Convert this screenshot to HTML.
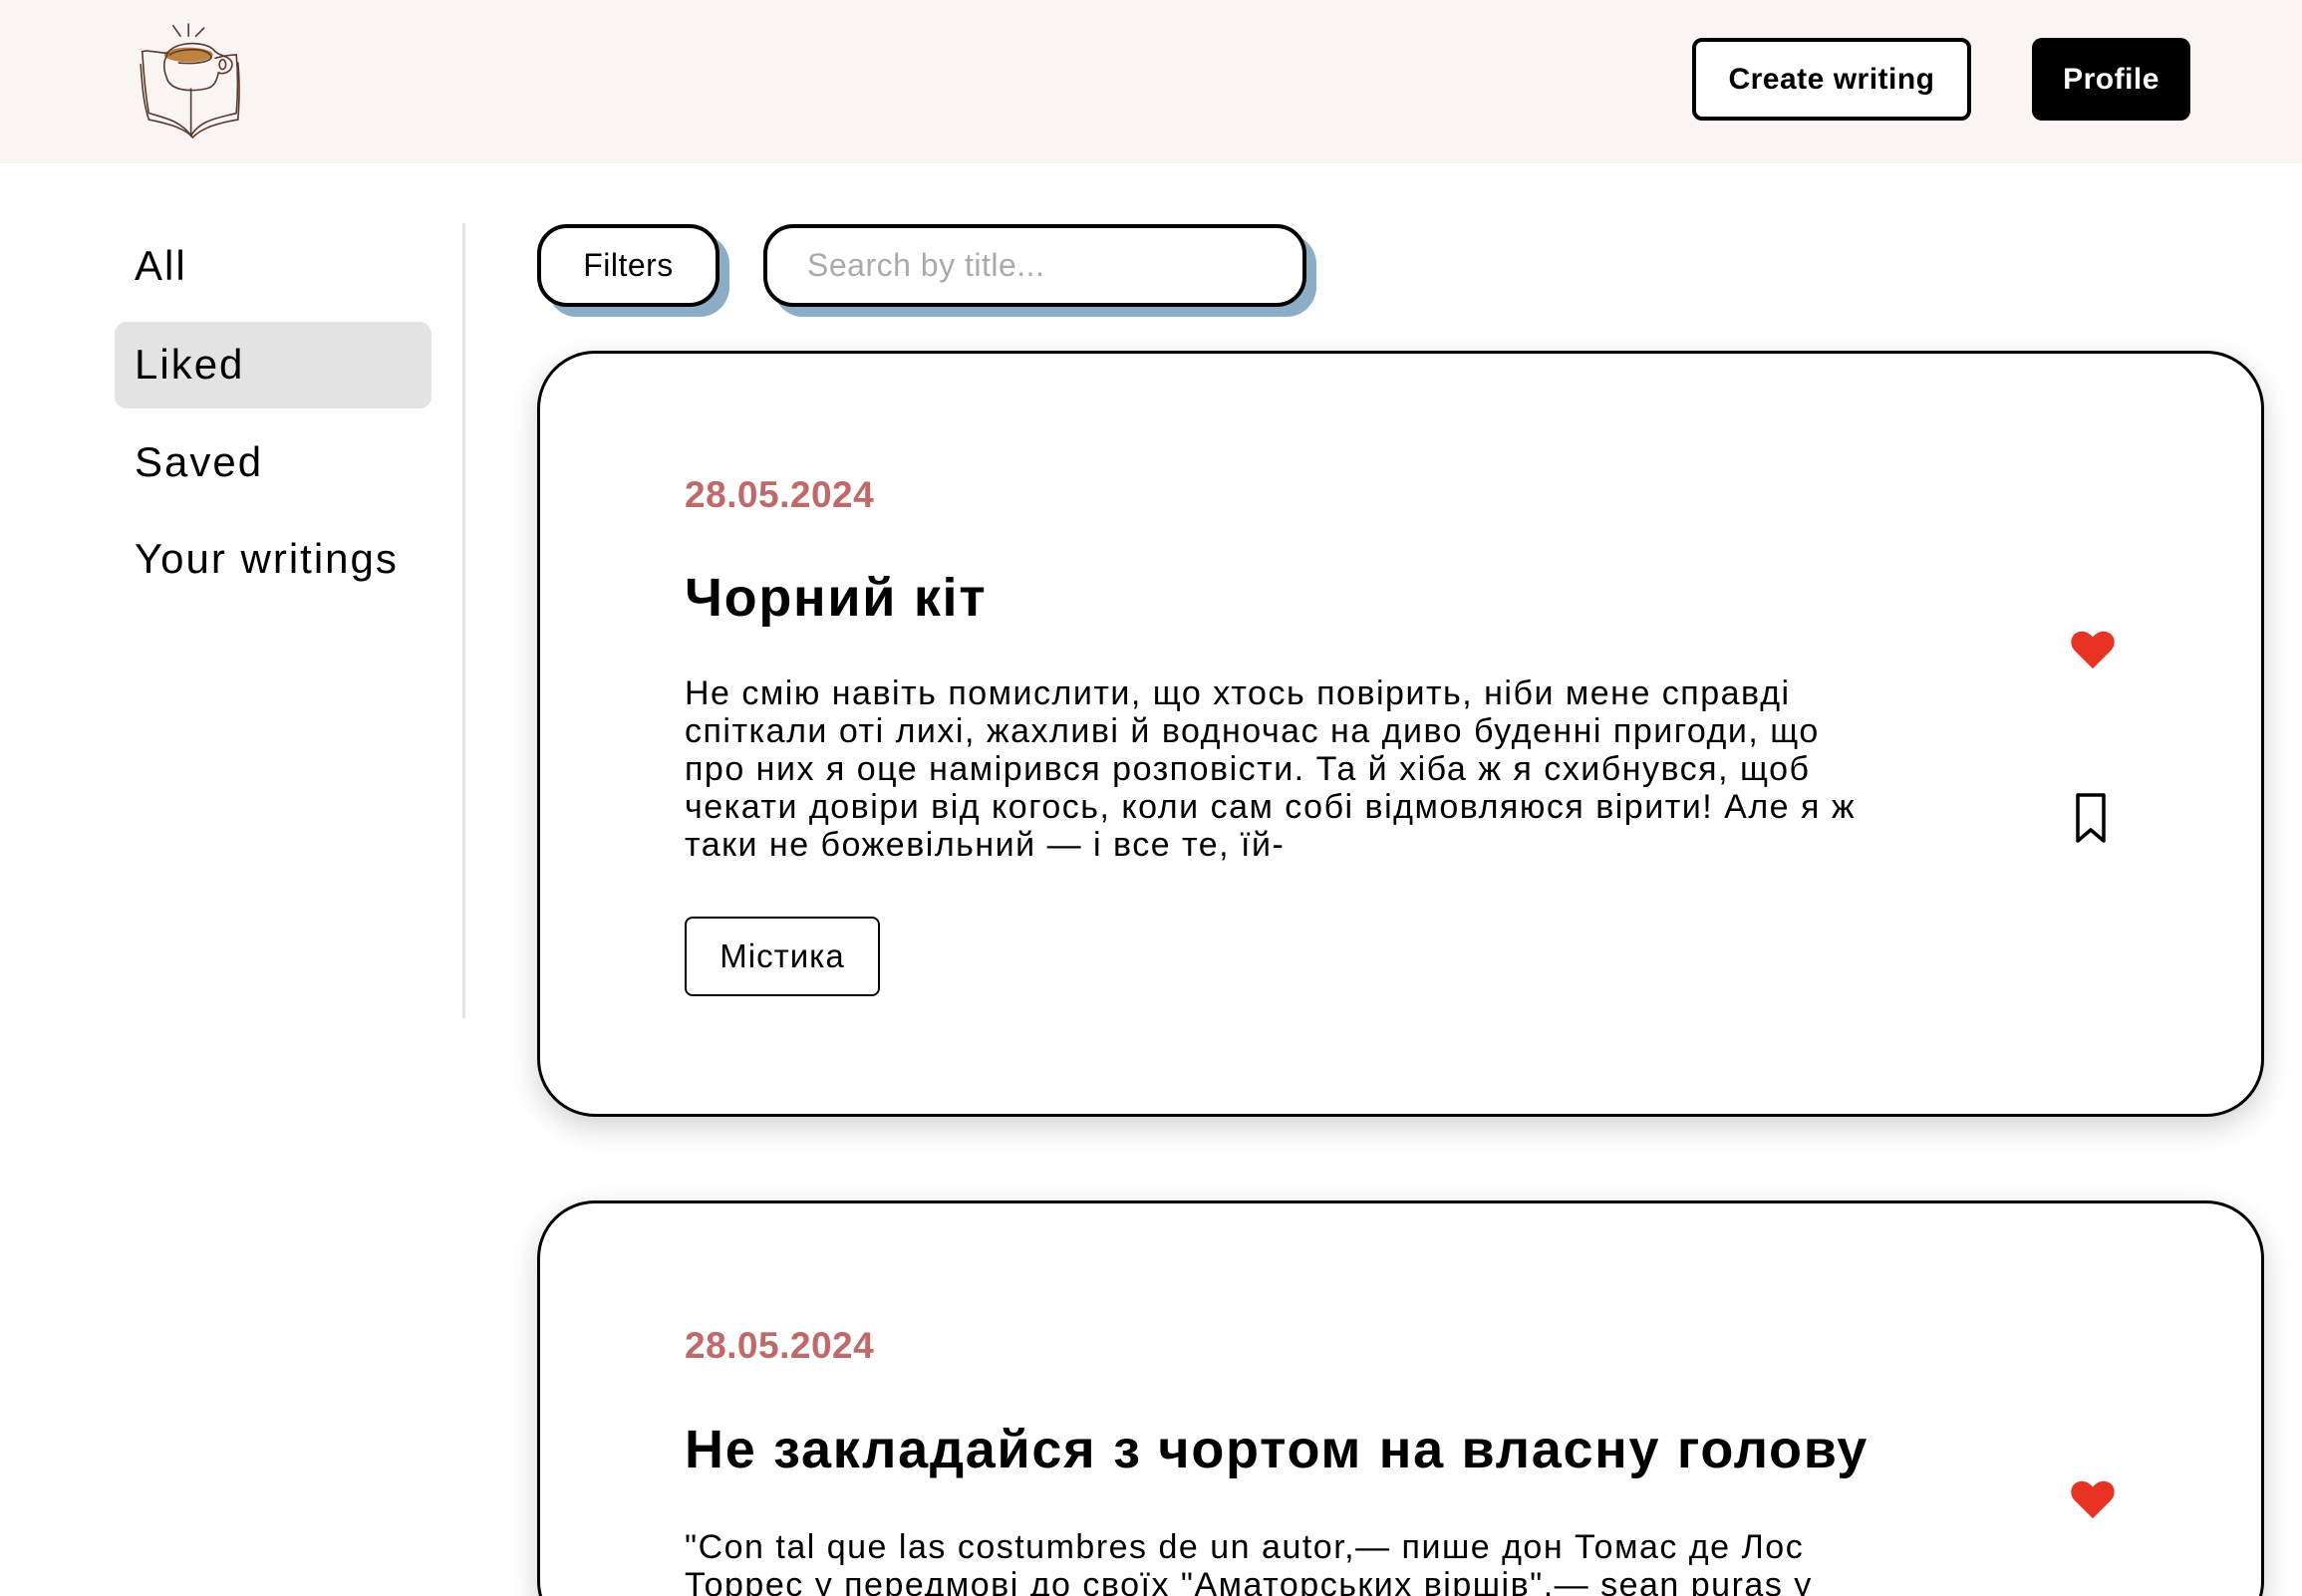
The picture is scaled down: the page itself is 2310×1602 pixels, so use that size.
<!DOCTYPE html>
<html><head><meta charset="utf-8"><style>
*{margin:0;padding:0;box-sizing:border-box}
html,body{width:2310px;height:1602px;overflow:hidden}
body{background:#fff;font-family:"Liberation Sans","DejaVu Sans",sans-serif;color:#000;position:relative}
#wrap{position:absolute;left:0;top:0;width:2310px;height:1602px;overflow:hidden}
.hdr{position:absolute;left:0;top:0;width:2310px;height:164px;background:#faf5f2}
.btn{position:absolute;top:38px;height:83px;border-radius:10px;font-weight:bold;font-size:30px;display:flex;align-items:center;justify-content:center;letter-spacing:.5px}
.nav{position:absolute;left:135px;font-size:42px;letter-spacing:2px;transform:translateY(-50%)}
.vl{position:absolute;left:464px;top:224px;width:3px;height:798px;background:#e2e2e2}
.pill{position:absolute;top:225px;height:83px;border:4px solid #000;border-radius:30px;background:#fff;box-shadow:10px 10px 0 #8badc6;font-size:32px;display:flex;align-items:center;letter-spacing:.5px}
.card{position:absolute;left:539px;width:1733px;border:3px solid #000;border-radius:58px;background:#fff;box-shadow:0 10px 30px rgba(0,0,0,.18)}
.date{position:absolute;left:145px;color:#c0696a;font-size:37px;font-weight:bold;letter-spacing:.5px}
.title{position:absolute;left:145px;font-size:54px;font-weight:bold;white-space:nowrap;letter-spacing:1.7px}
.body{position:absolute;left:145px;font-size:34px;line-height:38px;white-space:nowrap;letter-spacing:1.5px}
.tag{position:absolute;left:145px;border:2px solid #000;border-radius:8px;font-size:33px;letter-spacing:1px;display:flex;align-items:center;justify-content:center}
.ic{position:absolute}
</style></head><body><div id="wrap">
<div class="hdr"></div>
<svg class="ic" style="left:128px;top:20px" width="124" height="122" viewBox="25 15 130 150" fill="none" stroke="#5a3a30" stroke-width="2" stroke-linecap="round">
<path d="M70 22l9 13M89 20v15M108 25l-10 10"/>
<ellipse cx="89" cy="58" rx="30" ry="9" fill="#c0823f" stroke="none"/>
<path d="M62 60c2-18 48-22 60-6 6 6 14 4 20 12 4 10-8 18-16 14-2 8-4 18-16 20-20 4-44 2-48-14-4-10-4-20 0-26z"/>
<path d="M66 58c10-8 46-10 51 2 2 6-18 10-40 8"/>
<ellipse cx="131" cy="70" rx="4" ry="6"/>
<path d="M62 56c-20-2-24-4-30-2 2 34 4 54 8 76 20 6 40 10 52 28 12-20 34-22 56-28 2-24 2-50 0-72-8 0-18 2-26 4"/>
<path d="M30 70c2 30 4 50 10 68 20 4 44 10 54 22 12-12 32-18 56-22 2-26 2-50 0-70"/>
<path d="M92 100v58"/>
</svg>
<div class="btn" style="left:1698px;width:280px;border:4px solid #000;background:#fff">Create writing</div>
<div class="btn" style="left:2039px;width:159px;background:#000;color:#fff">Profile</div>

<div style="position:absolute;left:115px;top:323px;width:318px;height:87px;background:#e3e3e3;border-radius:12px"></div>
<div class="nav" style="top:267px">All</div>
<div class="nav" style="top:366px">Liked</div>
<div class="nav" style="top:464px">Saved</div>
<div class="nav" style="top:561px">Your writings</div>
<div class="vl"></div>

<div class="pill" style="left:539px;width:183px;justify-content:center">Filters</div>
<div class="pill" style="left:766px;width:545px;padding-left:40px;color:#aaa">Search by title...</div>

<div class="card" style="top:352px;height:769px">
<div class="date" style="top:121px">28.05.2024</div>
<div class="title" style="top:214px">Чорний кіт</div>
<div class="body" style="top:322px">Не смію навіть помислити, що хтось повірить, ніби мене справді<br>спіткали оті лихі, жахливі й водночас на диво буденні пригоди, що<br>про них я оце намірився розповісти. Та й хіба ж я схибнувся, щоб<br>чекати довіри від когось, коли сам собі відмовляюся вірити! Але я ж<br>таки не божевільний — і все те, їй-</div>
<div class="tag" style="top:565px;width:196px;height:80px">Містика</div>
<svg class="ic" style="left:1535px;top:275px" width="46" height="44" viewBox="0 0 24 22"><path fill="#e83324" d="M12 21 2.5 11.5C0 9 0 4.5 3 2.5 6 .5 9.5 1.5 12 4.5 14.5 1.5 18 .5 21 2.5c3 2 3 6.5.5 9z"/></svg>
<svg class="ic" style="left:1540px;top:440px" width="32" height="52" viewBox="0 0 32 52"><path d="M3 3h26v46L16 38 3 49z" fill="none" stroke="#000" stroke-width="3.5" stroke-linejoin="round"/></svg>
</div>

<div class="card" style="top:1205px;height:440px">
<div class="date" style="top:122px">28.05.2024</div>
<div class="title" style="top:216px">Не закладайся з чортом на власну голову</div>
<div class="body" style="top:326px">"Con tal que las costumbres de un autor,— пише дон Томас де Лос<br>Торрес у передмові до своїх "Аматорських віршів",— sean puras y</div>
<svg class="ic" style="left:1535px;top:275px" width="46" height="44" viewBox="0 0 24 22"><path fill="#e83324" d="M12 21 2.5 11.5C0 9 0 4.5 3 2.5 6 .5 9.5 1.5 12 4.5 14.5 1.5 18 .5 21 2.5c3 2 3 6.5.5 9z"/></svg>
</div>
</div></body></html>
